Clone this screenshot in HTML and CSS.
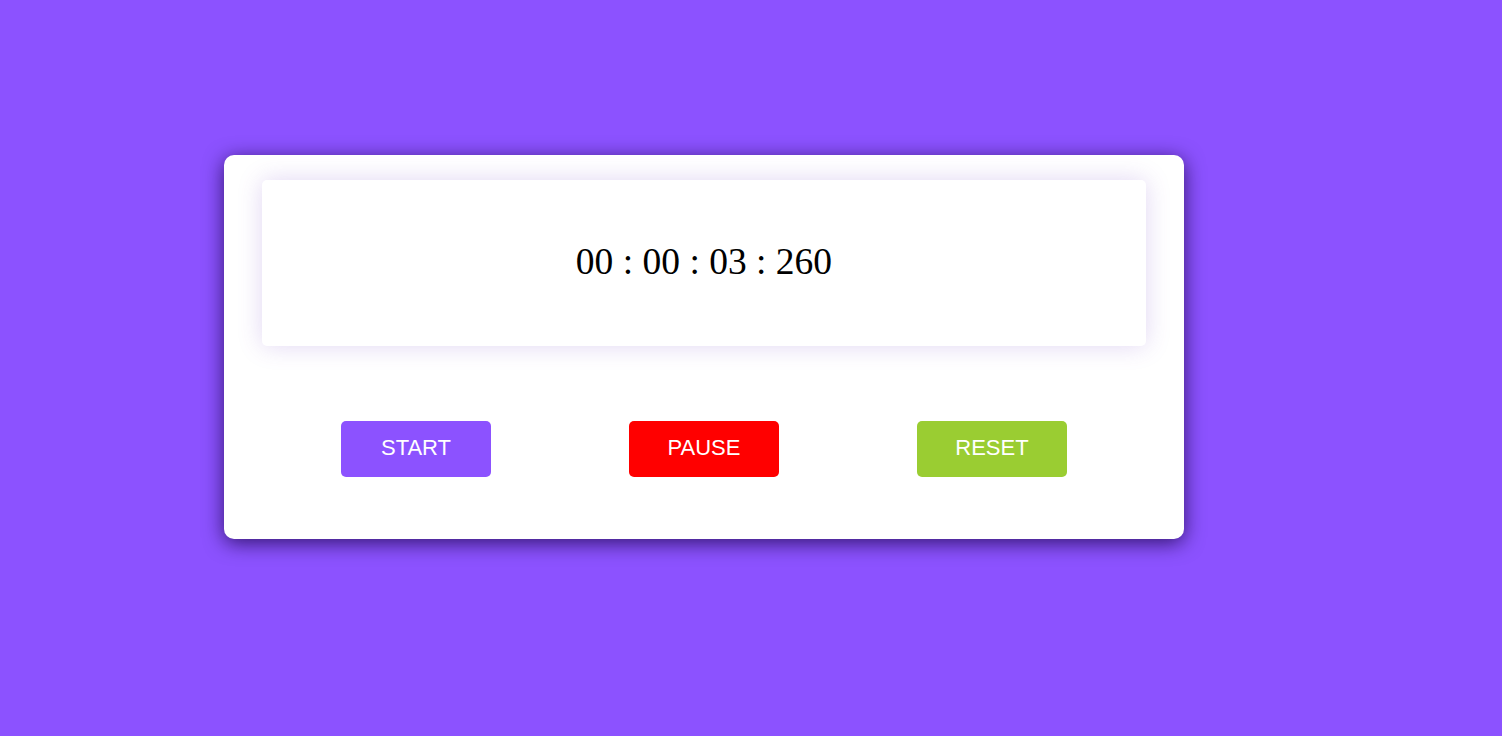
FILE: index.html
```html
<!DOCTYPE html>
<html>
<head>
<meta charset="utf-8">
<link rel="stylesheet" href="styles.css">
</head>
<body>
<div class="card">
  <div class="display">00 : 00 : 03 : 260</div>
  <div class="buttons">
    <button class="btn start">START</button>
    <button class="btn pause">PAUSE</button>
    <button class="btn reset">RESET</button>
  </div>
</div>
</body>
</html>
```
FILE: styles.css
```css
html, body {
  margin: 0;
  padding: 0;
}
body {
  background: #8c52ff;
  width: 1502px;
  height: 736px;
  overflow: hidden;
}
.card {
  box-sizing: border-box;
  width: 960px;
  height: 384px;
  margin: 155px 0 0 224px;
  padding: 25px 38px 0 38px;
  background: #fff;
  border-radius: 10px;
  box-shadow: 0 4px 20px rgba(20, 0, 60, 0.75);
}
.display {
  box-sizing: border-box;
  height: 166px;
  padding-bottom: 3px;
  display: flex;
  align-items: center;
  justify-content: center;
  font-family: "Liberation Serif", "Times New Roman", serif;
  font-size: 37.5px;
  color: #000;
  background: #fff;
  border-radius: 5px;
  box-shadow: 0 0 24px rgba(120, 70, 200, 0.22);
}
.buttons {
  display: flex;
  justify-content: center;
  gap: 138px;
  margin-top: 75px;
}
.btn {
  width: 150px;
  height: 56px;
  border: none;
  border-radius: 5px;
  color: #fff;
  font-family: "Liberation Sans", Arial, sans-serif;
  font-size: 22px;
  padding: 0 0 2px 0;
}
.start { background: #8c52ff; }
.pause { background: #ff0000; }
.reset { background: #9acd32; }
```
